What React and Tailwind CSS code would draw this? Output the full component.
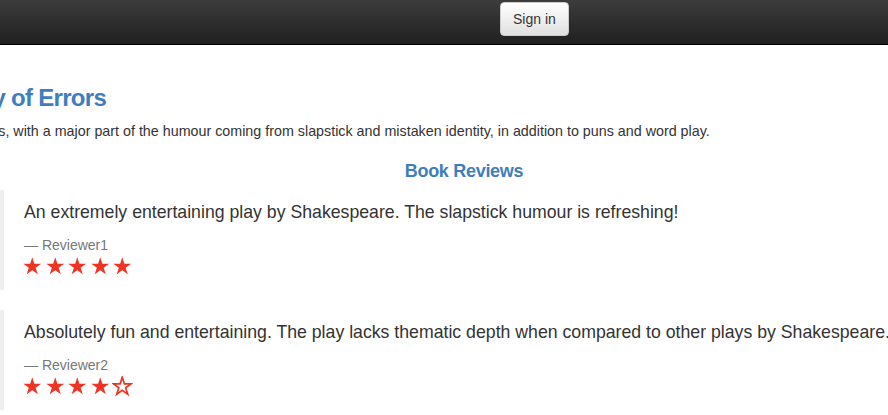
import React from 'react';

const reviews = [
    { text: "An extremely entertaining play by Shakespeare. The slapstick humour is refreshing!", author: "Reviewer1", rating: 5 },
    { text: "Absolutely fun and entertaining. The play lacks thematic depth when compared to other plays by Shakespeare.", author: "Reviewer2", rating: 4 },
];

const Star = ({ filled }) => (
    <svg width="20.5" height="20.5" viewBox="0 0 24 24" className="shrink-0">
        <polygon
            points="12,1.5 14.47,9.1 22.46,9.1 15.99,13.8 18.47,21.4 12,16.7 5.53,21.4 8.01,13.8 1.54,9.1 9.53,9.1"
            fill={filled ? "#ee3424" : "#ffffff"}
            stroke="#ee3424"
            strokeWidth={filled ? 0 : 2}
            strokeLinejoin="miter"
        />
    </svg>
);

const Review = ({ text, author, rating }) => (
    <blockquote className="border-l-[4px] border-[#eeeeee] pl-5 pr-5 pt-[10px] pb-[11px] mb-5">
        <p className="text-[17.7px] leading-[25px] text-[#333] whitespace-nowrap">{text}</p>
        <footer className="mt-[10px] text-[14px] leading-5 text-[#777]">— {author}</footer>
        <div className="flex gap-[2px] h-[25px] items-center -ml-[2px] -mt-[1px]">
            {[1, 2, 3, 4, 5].map(i => <Star key={i} filled={i <= rating} />)}
        </div>
    </blockquote>
);

export default function App() {
    return (
        <div className="min-h-screen bg-white overflow-hidden font-['Helvetica_Neue','Liberation_Sans',Arial,sans-serif]">
            {/* Navbar */}
            <header className="h-[45px] bg-gradient-to-b from-[#3c3c3c] to-[#202020] border-b border-black flex items-start">
                <button className="ml-[500px] mt-[2px] h-[34px] px-3 text-[14px] text-[#333] rounded-[4px] border border-[#ccc] bg-gradient-to-b from-white to-[#e0e0e0]">
                    Sign in
                </button>
            </header>

            {/* Content, scrolled so the left part is off screen */}
            <main className="-ml-[130px] w-[1100px] pt-[40px]">
                <h3 className="-ml-[2px] text-[24px] leading-[26px] font-bold tracking-[-0.7px] text-[#3f7ebd]">The Comedy of Errors</h3>
                <p className="mt-[10px] -ml-[10px] text-[14.3px] leading-5 text-[#333] whitespace-nowrap">
                    most farcical comedies, with a major part of the humour coming from slapstick and mistaken identity, in addition to puns and word play.
                </p>

                <section className="ml-[130px] w-[928px] mt-[20px]">
                    <h4 className="text-center text-[18px] leading-5 font-bold tracking-[-0.3px] text-[#3f7ebd] mb-[9px]">Book Reviews</h4>
                    {reviews.map((r, i) => <Review key={i} {...r} />)}
                </section>
            </main>
        </div>
    );
}
